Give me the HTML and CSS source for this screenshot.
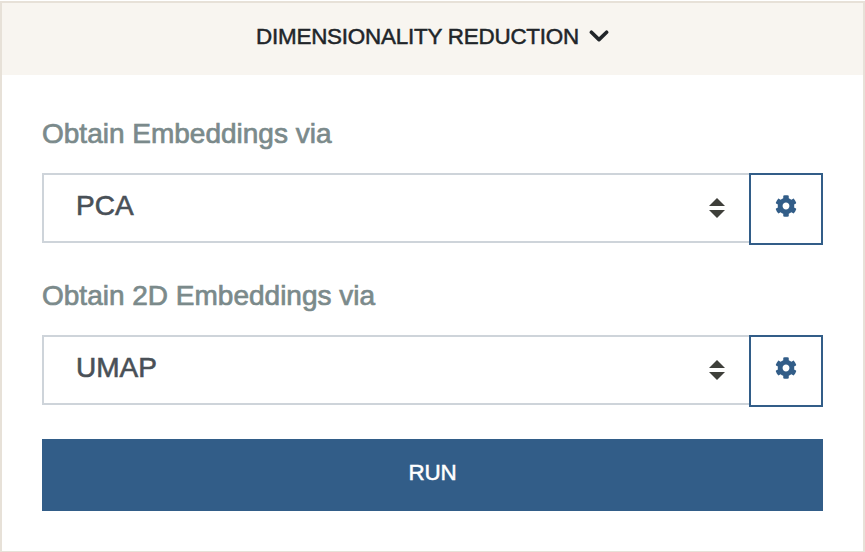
FILE: index.html
```
<!DOCTYPE html>
<html lang="en">
<head>
<meta charset="utf-8">
<title>Dimensionality Reduction</title>
<link rel="stylesheet" href="styles.css">
</head>
<body>
<section class="card">
  <header class="card-header">
    <span class="title">DIMENSIONALITY REDUCTION</span>
    <svg class="chevron" viewBox="0 0 20 14"><path d="M2.4 3.2 L10 10.6 L17.6 3.2"/></svg>
  </header>
  <div class="card-body">
    <div class="label">Obtain Embeddings via</div>
    <div class="group">
      <div class="select"><span class="value">PCA</span><svg class="carets" viewBox="0 0 16 20"><path d="M0 8 8 0l8 8zM0 12h16l-8 8z"/></svg></div>
      <button class="settings" aria-label="Settings"><svg class="gear" viewBox="0 0 512 512"><path d="M487.4 315.7l-42.6-24.6c4.3-23.2 4.3-47 0-70.2l42.6-24.6c4.9-2.8 7.1-8.6 5.5-14-11.1-35.6-30-67.8-54.7-94.6-3.8-4.1-10-5.1-14.8-2.3L380.8 110c-17.9-15.4-38.5-27.3-60.8-35.1V25.8c0-5.600-3.9-10.500-9.400-11.700-36.7-8.200-74.3-7.800-109.200 0-5.500 1.200-9.400 6.100-9.400 11.700V75c-22.200 7.900-42.800 19.800-60.800 35.100L88.7 85.500c-4.900-2.800-11-1.900-14.800 2.300-24.700 26.700-43.600 58.900-54.700 94.600-1.700 5.400.6 11.200 5.500 14L67.300 221c-4.300 23.200-4.300 47 0 70.200l-42.600 24.600c-4.900 2.800-7.100 8.600-5.500 14 11.100 35.600 30 67.800 54.700 94.600 3.800 4.100 10 5.100 14.800 2.300l42.600-24.600c17.900 15.400 38.500 27.300 60.800 35.100v49.200c0 5.600 3.900 10.500 9.400 11.700 36.700 8.200 74.300 7.800 109.200 0 5.500-1.200 9.400-6.100 9.400-11.700v-49.200c22.200-7.900 42.800-19.800 60.800-35.100l42.600 24.600c4.900 2.800 11 1.900 14.800-2.300 24.700-26.700 43.600-58.900 54.700-94.600 1.500-5.500-.7-11.300-5.600-14.100zM256 336c-44.100 0-80-35.900-80-80s35.900-80 80-80 80 35.900 80 80-35.900 80-80 80z"/></svg></button>
    </div>
    <div class="label">Obtain 2D Embeddings via</div>
    <div class="group">
      <div class="select"><span class="value">UMAP</span><svg class="carets" viewBox="0 0 16 20"><path d="M0 8 8 0l8 8zM0 12h16l-8 8z"/></svg></div>
      <button class="settings" aria-label="Settings"><svg class="gear" viewBox="0 0 512 512"><path d="M487.4 315.7l-42.6-24.6c4.3-23.2 4.3-47 0-70.2l42.6-24.6c4.9-2.8 7.1-8.6 5.5-14-11.1-35.6-30-67.8-54.7-94.6-3.8-4.1-10-5.1-14.8-2.3L380.8 110c-17.9-15.4-38.5-27.3-60.8-35.1V25.8c0-5.600-3.9-10.500-9.400-11.700-36.7-8.200-74.3-7.800-109.200 0-5.500 1.200-9.400 6.100-9.400 11.700V75c-22.200 7.900-42.800 19.800-60.800 35.100L88.7 85.500c-4.900-2.800-11-1.900-14.800 2.300-24.700 26.700-43.600 58.900-54.700 94.600-1.700 5.400.6 11.200 5.500 14L67.300 221c-4.300 23.200-4.300 47 0 70.200l-42.600 24.600c-4.900 2.800-7.100 8.600-5.500 14 11.100 35.600 30 67.800 54.700 94.600 3.800 4.100 10 5.100 14.800 2.300l42.600-24.600c17.900 15.400 38.500 27.300 60.800 35.100v49.200c0 5.600 3.900 10.500 9.400 11.700 36.700 8.200 74.300 7.800 109.200 0 5.500-1.200 9.400-6.100 9.400-11.700v-49.200c22.200-7.900 42.800-19.800 60.800-35.100l42.600 24.600c4.900 2.800 11 1.900 14.800-2.300 24.700-26.700 43.600-58.900 54.700-94.600 1.500-5.500-.7-11.300-5.600-14.100zM256 336c-44.100 0-80-35.900-80-80s35.900-80 80-80 80 35.900 80 80-35.900 80-80 80z"/></svg></button>
    </div>
    <button class="run">RUN</button>
  </div>
</section>
</body>
</html>
```
FILE: styles.css
```
* { box-sizing: border-box; }
body { margin: 0; padding-top: 1px; background: #fff; font-family: "Liberation Sans", Arial, sans-serif; }
.card { height: 551px; border: 2px solid #e7e1d8; border-bottom-width: 1px; }
.card-header { height: 72px; background: #f8f5f0; display: flex; justify-content: center; align-items: center; gap: 10px; padding-bottom: 4px; color: #212529; font-size: 22.4px; letter-spacing: -0.21px; -webkit-text-stroke: 0.5px; }
.chevron { width: 20px; height: 14px; margin-top: -3px; fill: none; stroke: #212529; stroke-width: 3.6; stroke-linecap: round; stroke-linejoin: round; }
.card-body { padding: 38px 40px 0; }
.label { height: 42px; line-height: 42px; margin-bottom: 18px; color: #7b8a8b; font-size: 28px; -webkit-text-stroke: 0.7px; }
.group { display: flex; height: 72px; margin-bottom: 30px; }
.group:last-of-type { margin-bottom: 32px; }
.select { flex: 1; height: 70px; border: 2px solid #ced4da; border-right: 0; display: flex; align-items: center; justify-content: space-between; padding: 0 24px 4px 32px; color: #495057; font-size: 28px; -webkit-text-stroke: 0.6px; }
.carets { width: 16px; height: 20px; fill: #3e3f3a; margin-top: 4px; }
.settings { width: 74px; height: 72px; border: 2px solid #325d88; background: #fff; padding: 0 0 6px; display: flex; align-items: center; justify-content: center; }
.gear { width: 22px; height: 22px; fill: #325d88; }
.run { display: block; width: 100%; height: 72px; border: 0; background: #325d88; color: #fff; padding: 0 0 5px; font: 22.4px "Liberation Sans", Arial, sans-serif; letter-spacing: -0.2px; -webkit-text-stroke: 0.5px; }
```
